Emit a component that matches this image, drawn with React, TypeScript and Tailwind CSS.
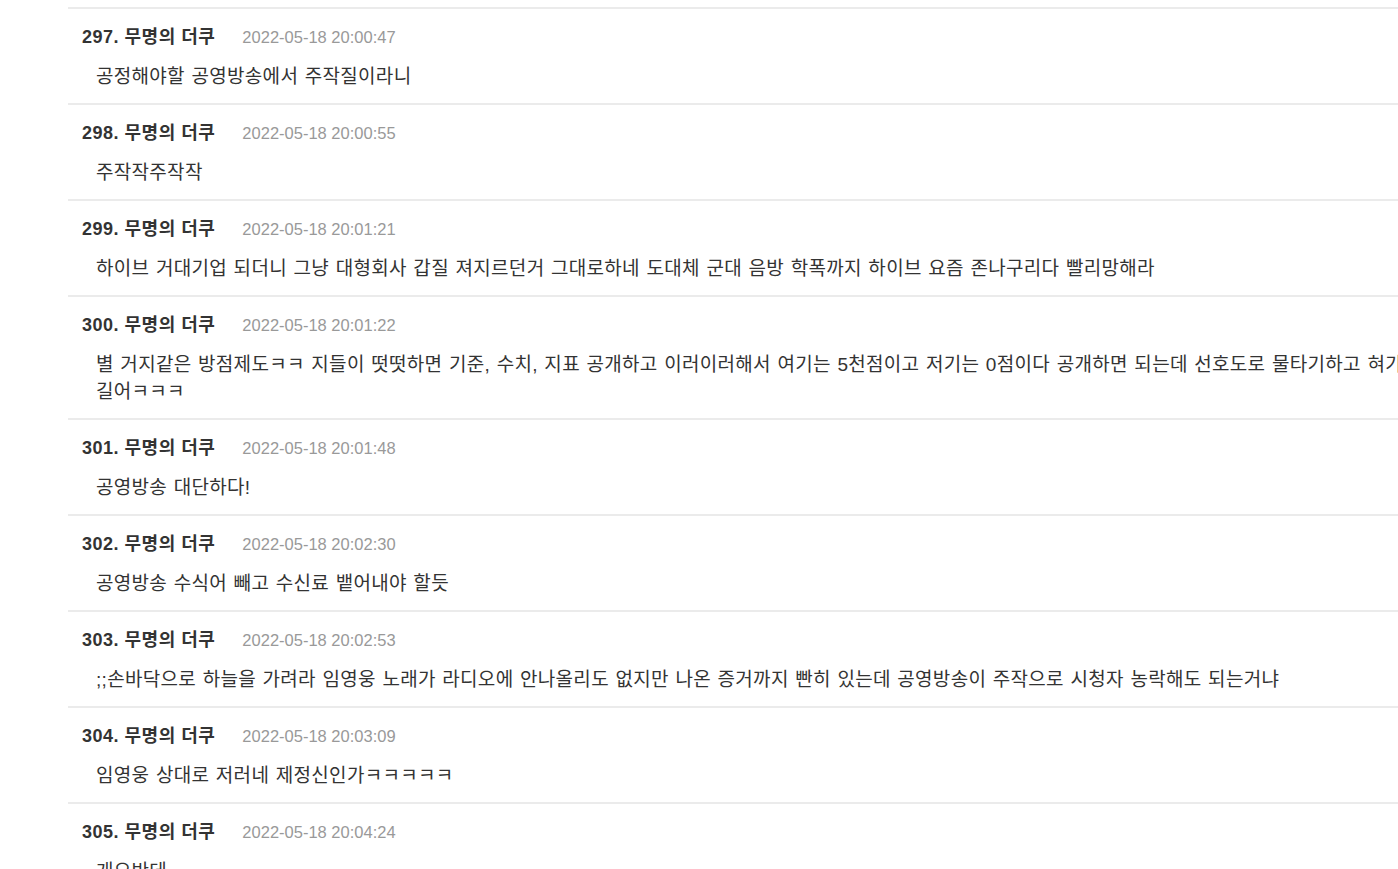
import React from "react";

const items = [
  { n: 297, d: "2022-05-18 20:00:47", t: "공정해야할 공영방송에서 주작질이라니" },
  { n: 298, d: "2022-05-18 20:00:55", t: "주작작주작작" },
  { n: 299, d: "2022-05-18 20:01:21", t: "하이브 거대기업 되더니 그냥 대형회사 갑질 져지르던거 그대로하네 도대체 군대 음방 학폭까지 하이브 요즘 존나구리다 빨리망해라" },
  { n: 300, d: "2022-05-18 20:01:22", t: "별 거지같은 방점제도ㅋㅋ 지들이 떳떳하면 기준, 수치, 지표 공개하고 이러이러해서 여기는 5천점이고 저기는 0점이다 공개하면 되는데 선호도로 물타기하고 혀가 길어ㅋㅋㅋ" },
  { n: 301, d: "2022-05-18 20:01:48", t: "공영방송 대단하다!" },
  { n: 302, d: "2022-05-18 20:02:30", t: "공영방송 수식어 빼고 수신료 뱉어내야 할듯" },
  { n: 303, d: "2022-05-18 20:02:53", t: ";;손바닥으로 하늘을 가려라 임영웅 노래가 라디오에 안나올리도 없지만 나온 증거까지 빤히 있는데 공영방송이 주작으로 시청자 농락해도 되는거냐" },
  { n: 304, d: "2022-05-18 20:03:09", t: "임영웅 상대로 저러네 제정신인가ㅋㅋㅋㅋㅋ" },
  { n: 305, d: "2022-05-18 20:04:24", t: "개오반데" },
];

export default function App() {
  return (
    <div
      className="w-[1398px] h-[869px] overflow-hidden bg-white"
      style={{ fontFamily: '"Liberation Sans", "Noto Sans CJK KR", sans-serif' }}
    >
      <div className="ml-[68px] w-[1350px] pt-[7px]">
        {items.map((it) => (
          <div key={it.n} className="border-t-2 border-[#ebebeb] pt-[16px] pb-[13px]">
            <div className="flex items-center pl-[14px] h-[24px]">
              <span className="text-[18px] font-bold text-[#333] tracking-[0.5px]">
                {it.n}. 무명의 더쿠
              </span>
              <span className="ml-[27px] text-[16.5px] text-[#999]">{it.d}</span>
            </div>
            <div className="mt-[14px] pl-[28px] text-[19px] leading-[27px] text-[#333] tracking-[0.3px] [word-spacing:1px]">
              {it.t}
            </div>
          </div>
        ))}
      </div>
    </div>
  );
}
